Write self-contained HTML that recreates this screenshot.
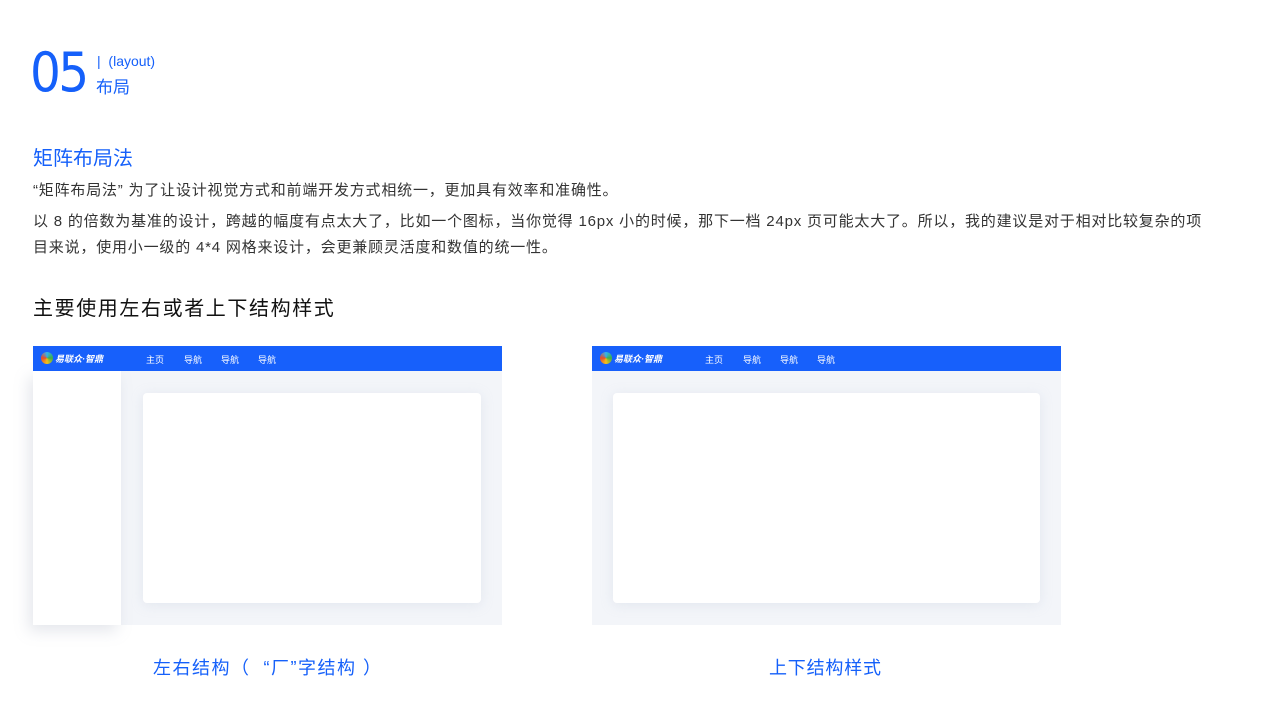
<!DOCTYPE html>
<html><head><meta charset="utf-8"><style>
*{margin:0;padding:0;box-sizing:border-box}
body{width:1280px;height:720px;background:#fff;position:relative;overflow:hidden;font-family:"Liberation Sans","Noto Sans CJK SC",sans-serif;color:#333}
.a{position:absolute;white-space:nowrap}
.blue{color:#1560fa}
.box{position:absolute;top:346px;width:469px;height:279px;background:#f3f5f9}
.nav{position:absolute;left:0;top:0;width:469px;height:25px;background:#1760fb;color:#fff;font-size:9px}
.nav span{position:absolute;top:7px}
.logo{position:absolute;left:8px;top:6px;width:12px;height:12px;border-radius:50%;background:conic-gradient(#2fb3f0,#3cb04a,#f5c019,#e64a2b,#2fb3f0)}
.lt{position:absolute;left:22px;top:6px;font-style:italic;font-weight:bold;font-size:9px}
.card{position:absolute;top:47px;height:210px;background:#fff;border-radius:4px;box-shadow:0 2px 12px rgba(180,190,210,.25)}
</style></head><body>
<div class="a blue" style="left:30px;top:42px;font-size:54px;line-height:62px;font-family:'DejaVu Sans','Liberation Sans',sans-serif;letter-spacing:-3px;transform:scaleX(.9);transform-origin:left">05</div>
<div class="a blue" style="left:97px;top:53px;font-size:14px">| &nbsp;(layout)</div>
<div class="a blue" style="left:96px;top:73px;font-size:17px">布局</div>
<div class="a blue" style="left:33px;top:142px;font-size:20px">矩阵布局法</div>
<div class="a" style="left:33px;top:179px;font-size:15px;letter-spacing:0.8px">“矩阵布局法” 为了让设计视觉方式和前端开发方式相统一，更加具有效率和准确性。</div>
<div class="a" style="left:33px;top:209px;font-size:15px;line-height:26px;letter-spacing:0.8px">以 8 的倍数为基准的设计，跨越的幅度有点太大了，比如一个图标，当你觉得 16px 小的时候，那下一档 24px 页可能太大了。所以，我的建议是对于相对比较复杂的项<br>目来说，使用小一级的 4*4 网格来设计，会更兼顾灵活度和数值的统一性。</div>
<div class="a" style="left:33px;top:292px;font-size:20px;color:#111;letter-spacing:1.6px">主要使用左右或者上下结构样式</div>

<div class="box" style="left:33px">
<div style="position:absolute;left:0;top:25px;width:88px;height:254px;background:#fff;box-shadow:-4px 6px 14px rgba(150,160,180,.25)"></div>
<div class="card" style="left:110px;width:338px"></div>
<div class="nav"><div class="logo"></div><div class="lt">易联众·智鼎</div><span style="left:113px">主页</span><span style="left:151px">导航</span><span style="left:188px">导航</span><span style="left:225px">导航</span></div>
</div>

<div class="box" style="left:592px">
<div class="card" style="left:21px;width:427px"></div>
<div class="nav"><div class="logo"></div><div class="lt">易联众·智鼎</div><span style="left:113px">主页</span><span style="left:151px">导航</span><span style="left:188px">导航</span><span style="left:225px">导航</span></div>
</div>

<div class="a blue" style="left:153px;top:654px;font-size:18px;letter-spacing:1.5px">左右结构（ &nbsp;“厂”字结构 ）</div>
<div class="a blue" style="left:769px;top:654px;font-size:18px;letter-spacing:0.8px">上下结构样式</div>
</body></html>
